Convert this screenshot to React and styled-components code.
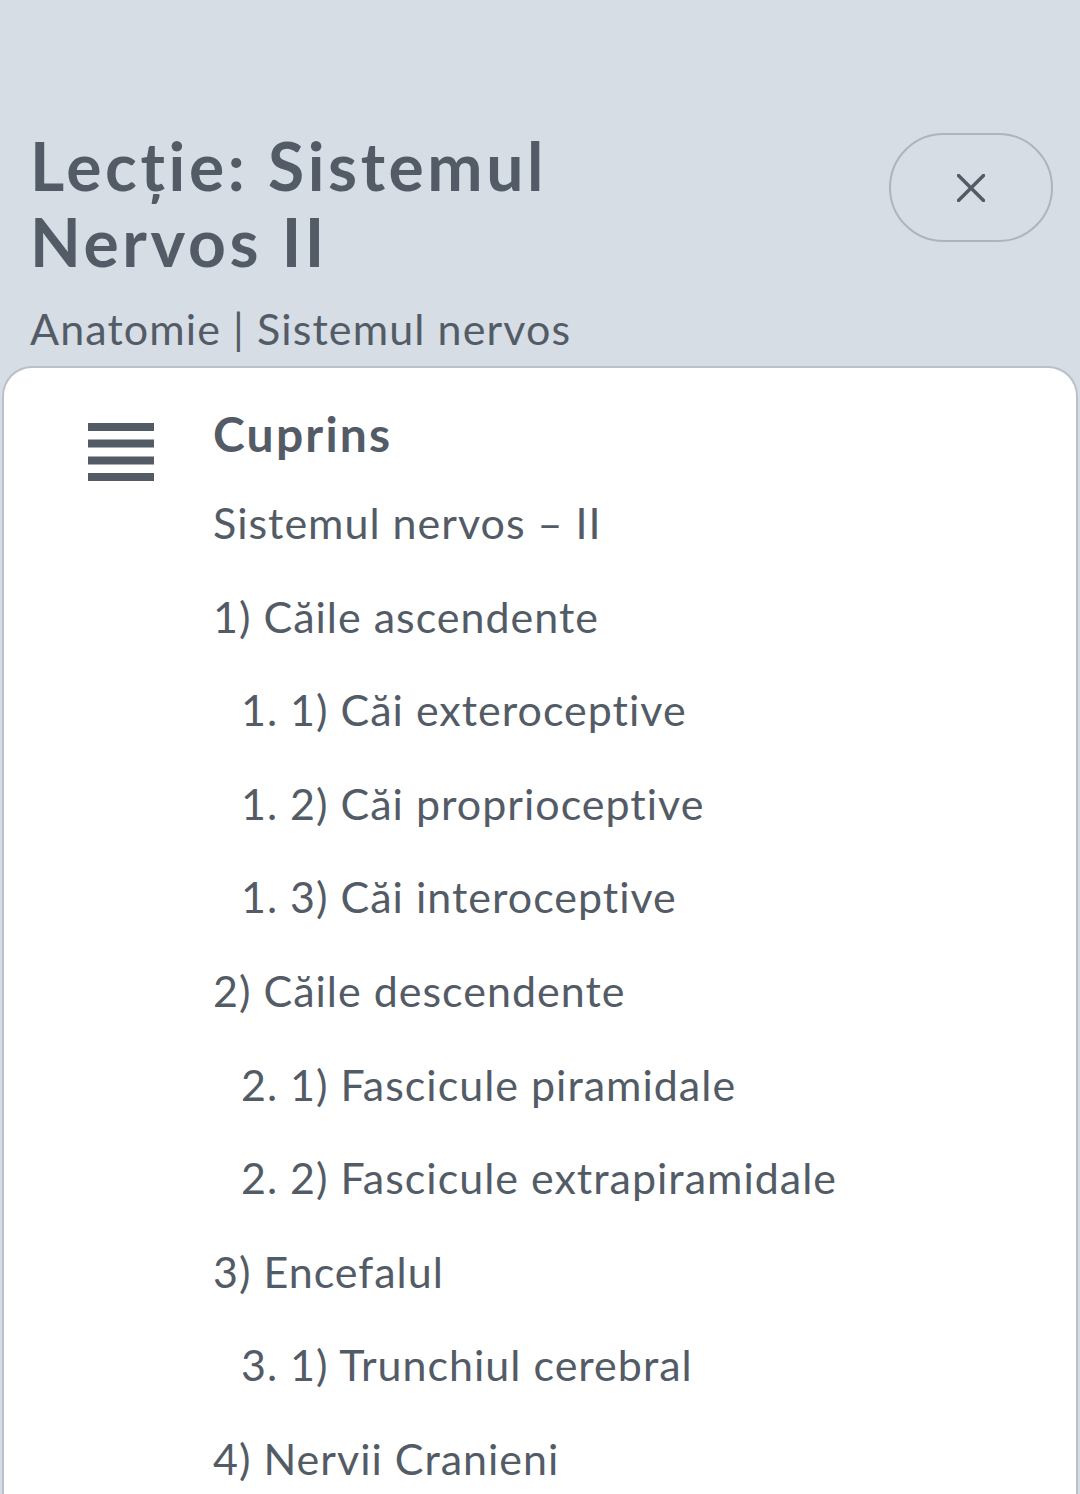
import React from "react";
import styled, { createGlobalStyle } from "styled-components";

const Global = createGlobalStyle`
  html, body { margin: 0; padding: 0; }
  body { background: #d6dde5; font-family: "Lato", "Noto Sans", sans-serif; color: #535c66; }
`;

const Page = styled.div`
  min-height: 1494px;
  background: #d6dde5;
  overflow: hidden;
`;

const Header = styled.header`
  padding: 0 27px 0 30px;
`;

const TopRow = styled.div`
  display: flex;
  justify-content: space-between;
  align-items: flex-start;
  padding-top: 128px;
`;

const Title = styled.h1`
  margin: 0;
  max-width: 600px;
  font-size: 66px;
  line-height: 76px;
  font-weight: 700;
  letter-spacing: 3.6px;
  color: #535c66;
`;

const CloseButton = styled.button`
  margin-top: 5px;
  width: 164px;
  height: 109px;
  border: 2px solid #adb4bc;
  border-radius: 55px;
  background: transparent;
  display: flex;
  align-items: center;
  justify-content: center;
  padding: 0;
`;

const Subtitle = styled.p`
  margin: 23px 0 0;
  font-size: 43px;
  line-height: 52px;
  letter-spacing: 1.1px;
  color: #535c66;
`;

const Card = styled.section`
  margin: 11px 2px 0;
  background: #fff;
  border: 2px solid #b9c0c8;
  border-bottom: none;
  border-radius: 30px 30px 0 0;
  padding: 40px 0 0 84px;
  display: flex;
  align-items: flex-start;
  gap: 59px;
  min-height: 1200px;
`;

const MenuIcon = styled.svg`
  margin-top: 15px;
  flex: none;
`;

const Toc = styled.div`
  display: flex;
  flex-direction: column;
`;

const TocTitle = styled.h2`
  margin: 0 0 16px;
  font-size: 48px;
  line-height: 52px;
  font-weight: 700;
  letter-spacing: 2.2px;
  color: #535c66;
`;

const TocItem = styled.div`
  font-size: 43px;
  line-height: 93.6px;
  letter-spacing: 1px;
  padding-left: ${(p) => (p.$sub ? "28px" : "0")};
  color: #535c66;
  white-space: nowrap;
`;

const items = [
  ["Sistemul nervos – II", false],
  ["1) Căile ascendente", false],
  ["1. 1) Căi exteroceptive", true],
  ["1. 2) Căi proprioceptive", true],
  ["1. 3) Căi interoceptive", true],
  ["2) Căile descendente", false],
  ["2. 1) Fascicule piramidale", true],
  ["2. 2) Fascicule extrapiramidale", true],
  ["3) Encefalul", false],
  ["3. 1) Trunchiul cerebral", true],
  ["4) Nervii Cranieni", false],
];

export default function App() {
  return (
    <Page>
      <Global />
      <Header>
        <TopRow>
          <Title>Lecție: Sistemul Nervos II</Title>
          <CloseButton aria-label="Închide">
            <svg width="28" height="28" viewBox="0 0 28 28">
              <path d="M1.5 1.5 L26.5 26.5 M26.5 1.5 L1.5 26.5" stroke="#535c66" strokeWidth="3.5" strokeLinecap="square" />
            </svg>
          </CloseButton>
        </TopRow>
        <Subtitle>Anatomie | Sistemul nervos</Subtitle>
      </Header>
      <Card>
        <MenuIcon width="66" height="58" viewBox="0 0 66 58">
          <rect x="0" y="0" width="66" height="8" fill="#535c66" />
          <rect x="0" y="16.5" width="66" height="8" fill="#535c66" />
          <rect x="0" y="33.5" width="66" height="8" fill="#535c66" />
          <rect x="0" y="50" width="66" height="8" fill="#535c66" />
        </MenuIcon>
        <Toc>
          <TocTitle>Cuprins</TocTitle>
          {items.map(([t, sub]) => (
            <TocItem key={t} $sub={sub}>{t}</TocItem>
          ))}
        </Toc>
      </Card>
    </Page>
  );
}
